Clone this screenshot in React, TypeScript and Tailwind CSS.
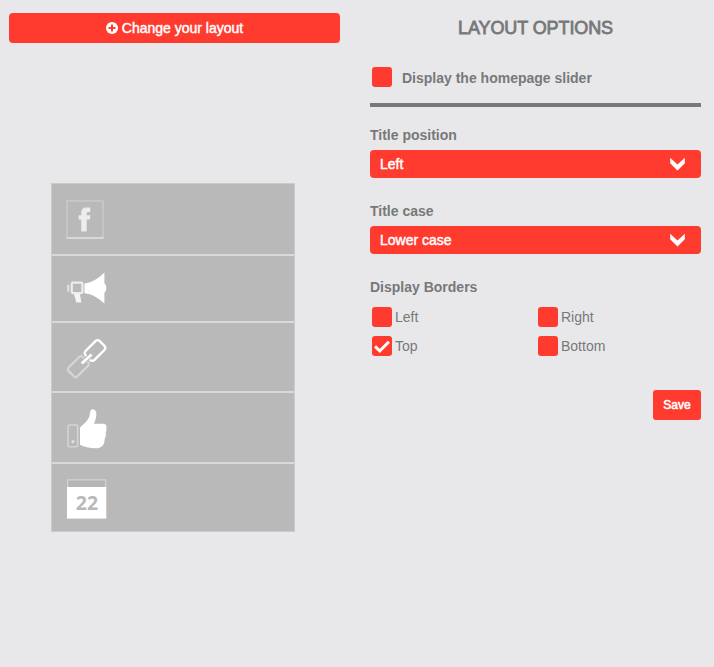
import React, { useState } from "react";

function Check({ checked, onChange, label }: { checked: boolean; onChange: () => void; label: string }) {
  return (
    <button
      role="checkbox"
      aria-checked={checked}
      aria-label={label}
      onClick={onChange}
      className="flex size-5 shrink-0 items-center justify-center rounded-[3px] bg-[#ff3b30]"
    >
      {checked && (
        <svg width="20" height="20" viewBox="0 0 20 20" fill="none">
          <path d="M3.1 10.4 7.8 15 16.9 5.8" stroke="#fff" strokeWidth="3" />
        </svg>
      )}
    </button>
  );
}

function Field({ label, value }: { label: string; value: string }) {
  return (
    <div className="h-[76px]">
      <div className="h-[23px] text-sm leading-4 font-bold">{label}</div>
      <button className="flex h-7 w-full items-center justify-between rounded bg-[#ff3b30] pr-4 pl-2.5 text-sm text-white [-webkit-text-stroke:0.45px]">
        <span>{value}</span>
        <svg width="15" height="14" viewBox="0 0 15 14" fill="#fff">
          <path d="M0.2 0.8 7.5 7.4 14.8 0.8V6.3L7.5 13.4 0.2 6.3Z" />
        </svg>
      </button>
    </div>
  );
}

function FacebookIcon() {
  return (
    <svg width="40" height="40" viewBox="0 0 40 40">
      <rect x="0.9" y="0.9" width="36" height="37" fill="none" stroke="#cbcbcb" strokeWidth="1.4" />
      <path d="M0.5 38H37.5" stroke="#d8d8d8" strokeWidth="1.8" />
      <path d="M15.2 31.5V19.5H12.7V15.2H15.2V12.8C15.2 9.4 17.2 7.4 20.6 7.4H24.3V12H22.4C21.2 12 20.7 12.5 20.7 13.5V15.2H24.4L23.8 19.5H20.7V31.5Z" fill="#ededed" />
    </svg>
  );
}

function MegaphoneIcon() {
  return (
    <svg width="40" height="40" viewBox="0 0 40 40">
      <path d="M17.5 15.4C25 14.4 31 10.5 37.4 4.4V35.6C31 29.5 25 26 17.5 25.2Z" fill="#fff" />
      <path d="M37 15.2C40 16.5 40 23.5 37 24.8Z" fill="#fff" />
      <rect x="4.8" y="14.7" width="10.6" height="10.4" rx="1" fill="none" stroke="#ededed" strokeWidth="2.2" />
      <path d="M1.2 16.8V23.6" stroke="#dedede" strokeWidth="2.4" />
      <path d="M7 26H12.8L14.4 34.5H9.3Z" fill="#f5f5f5" />
    </svg>
  );
}

function LinkIcon() {
  return (
    <svg width="40" height="40" viewBox="0 0 40 40" fill="none">
      <rect x="-9.5" y="-6.2" width="20" height="12.4" rx="2.2" transform="translate(11 28) rotate(-45)" stroke="#d6d6d6" strokeWidth="2.2" />
      <rect x="-10" y="-6.3" width="20" height="12.6" rx="3" transform="translate(28 11.5) rotate(-45)" stroke="#fff" strokeWidth="2.4" />
      <path d="M16 23.6 24.2 15.8" stroke="#b9b9b9" strokeWidth="5" />
      <path d="M14.7 24.6 24.6 15.4" stroke="#fff" strokeWidth="2.7" />
    </svg>
  );
}

function ThumbIcon() {
  return (
    <svg width="40" height="40" viewBox="0 0 40 40">
      <rect x="1" y="16" width="9.7" height="21.8" rx="1.5" fill="none" stroke="#d4d4d4" strokeWidth="1.6" />
      <circle cx="6" cy="32.7" r="1.6" fill="#dedede" />
      <path d="M13 18.5C17 15 21 11.5 22.5 7C23 3 23.5 .2 25.5 .2C29.3 .2 29.7 4.5 29.2 7.5C28.7 11 27.5 13 27 14.8H36C39.2 14.8 40 17 39.2 19C39.8 21 39.2 23 38.6 24C39.3 26 38.5 28.5 37.6 30C37.8 34 36 38.2 31.5 39C25 39.7 18 38.2 13 35.7Z" fill="#fff" />
    </svg>
  );
}

function CalendarIcon() {
  return (
    <svg width="40" height="40" viewBox="0 0 40 40">
      <rect x="0.7" y="0.8" width="37.9" height="38" fill="#b5b5b5" stroke="#cfcfcf" strokeWidth="1.4" />
      <rect x="0" y="8" width="39.2" height="31.5" fill="#fff" />
      <text x="19.9" y="30.6" textAnchor="middle" fontFamily="Noto Sans, sans-serif" fontWeight="700" fontSize="19.5" fill="#b9b9b9">22</text>
    </svg>
  );
}

const rows = [
  { icon: <FacebookIcon />, cls: "h-[70px] pt-4 pl-3.5" },
  { icon: <MegaphoneIcon />, cls: "h-[65px] pt-3 pl-[15px]" },
  { icon: <LinkIcon />, cls: "h-[68px] pt-4 pl-[15px]" },
  { icon: <ThumbIcon />, cls: "h-[69px] pt-4 pl-[15px]" },
  { icon: <CalendarIcon />, cls: "h-[67px] pt-[15px] pl-[15px]" },
];

export default function App() {
  const [on, setOn] = useState<Record<string, boolean>>({ Top: true });
  const toggle = (k: string) => setOn((s) => ({ ...s, [k]: !s[k] }));
  return (
    <main className="flex h-[667px] w-[714px] gap-[30px] bg-[#e8e8ea] pt-[13px] pl-[9px] font-['Liberation_Sans',Arial,sans-serif] text-[#777879]">
      <section className="w-[331px]">
        <button className="flex h-[30px] w-full items-center justify-center gap-1 rounded bg-[#ff3b30] text-sm text-white [-webkit-text-stroke:0.45px]">
          <svg width="12" height="12" viewBox="0 0 12 12">
            <circle cx="6" cy="6" r="6" fill="#fff" />
            <path d="M6 2.5V9.5M2.5 6H9.5" stroke="#ff3b30" strokeWidth="2" />
          </svg>
          Change your layout
        </button>
        <div className="mt-[140px] ml-[42px] flex w-[244px] flex-col gap-0.5 border border-[#cbcbcc] bg-[#d9d9d9]">
          {rows.map((r, i) => (
            <div key={i} className={`bg-[#b9b9b9] ${r.cls}`}>
              {r.icon}
            </div>
          ))}
        </div>
      </section>
      <section className="w-[331px]">
        <h1 className="h-[54px] pt-0.5 text-center text-lg leading-[26px] tracking-[-0.1px] [-webkit-text-stroke:0.8px]">LAYOUT OPTIONS</h1>
        <div className="flex h-[40px] items-start gap-2.5 border-b-4 border-[#777879] pl-0.5">
          <Check label="Display the homepage slider" checked={!!on.slider} onChange={() => toggle("slider")} />
          <span className="pt-px text-sm leading-5 font-bold">Display the homepage slider</span>
        </div>
        <div className="pt-5">
          <Field label="Title position" value="Left" />
          <Field label="Title case" value="Lower case" />
        </div>
        <div className="h-7 text-sm leading-4 font-bold">Display Borders</div>
        <div className="grid grid-cols-[166px_1fr] gap-y-[9px] pl-0.5 text-sm leading-5">
          {["Left", "Right", "Top", "Bottom"].map((k) => (
            <div key={k} className="flex gap-[3px]">
              <Check label={k} checked={!!on[k]} onChange={() => toggle(k)} />
              {k}
            </div>
          ))}
        </div>
        <div className="flex justify-end pt-[34px]">
          <button className="h-[30px] w-12 rounded-[3px] bg-[#ff3b30] text-xs text-white [-webkit-text-stroke:0.55px]">Save</button>
        </div>
      </section>
    </main>
  );
}
